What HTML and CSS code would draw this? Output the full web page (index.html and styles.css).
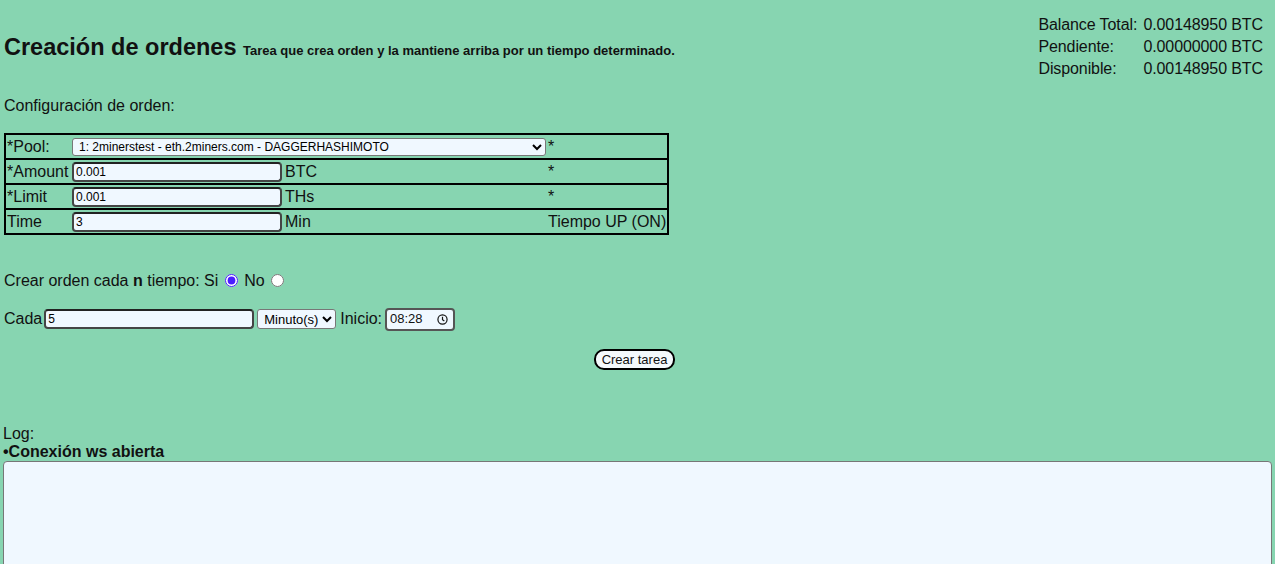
FILE: index.html
```html
<!DOCTYPE html>
<html lang="es">
<head>
<meta charset="utf-8">
<title>Creación de ordenes</title>
<link rel="stylesheet" href="styles.css">
</head>
<body>
<header class="top">
  <h2 class="title">Creación de ordenes <small class="subtitle">Tarea que crea orden y la mantiene arriba por un tiempo determinado.</small></h2>
  <div class="balance">
    <span>Balance Total:</span><span>0.00148950 BTC</span>
    <span>Pendiente:</span><span>0.00000000 BTC</span>
    <span>Disponible:</span><span>0.00148950 BTC</span>
  </div>
</header>

<p class="section">Configuración de orden:</p>

<table class="config">
  <colgroup>
    <col class="c1"><col class="c2"><col class="c3"><col class="c4">
  </colgroup>
  <tr>
    <td>*Pool:</td>
    <td colspan="2"><select class="pool"><option>1: 2minerstest - eth.2miners.com - DAGGERHASHIMOTO</option></select></td>
    <td>*</td>
  </tr>
  <tr>
    <td>*Amount</td>
    <td><input class="field" type="text" value="0.001"></td>
    <td>BTC</td>
    <td>*</td>
  </tr>
  <tr>
    <td>*Limit</td>
    <td><input class="field" type="text" value="0.001"></td>
    <td>THs</td>
    <td>*</td>
  </tr>
  <tr>
    <td>Time</td>
    <td><input class="field" type="text" value="3"></td>
    <td>Min</td>
    <td>Tiempo UP (ON)</td>
  </tr>
</table>

<div class="repeat">Crear orden cada <b>n</b> tiempo: Si <input class="radio" type="radio" name="rep" checked> No <input class="radio" type="radio" name="rep"></div>

<div class="cada">Cada <input class="field wide" type="text" value="5"> <select class="unit"><option>Minuto(s)</option></select> Inicio: <span class="time">08:28 <svg class="clock" viewBox="0 0 12 12" width="11" height="11"><circle cx="6" cy="6" r="5" fill="none" stroke="#111" stroke-width="1.3"/><path d="M6 3v3.2l2 1.4" fill="none" stroke="#111" stroke-width="1.3"/></svg></span></div>

<div class="actions"><button class="btn">Crear tarea</button></div>

<div class="log">
  <div>Log:</div>
  <div class="msg">•Conexión ws abierta</div>
  <textarea class="logbox"></textarea>
</div>
</body>
</html>
```

FILE: styles.css
```css
html, body {
  margin: 0;
  height: 100%;
  overflow: hidden;
}
body {
  background: #87d5b1;
  color: #111;
  font-family: "Liberation Sans", Arial, sans-serif;
  font-size: 16px;
  padding: 0 3px;
}
.top {
  display: flex;
  justify-content: space-between;
  align-items: flex-start;
}
.title {
  margin: 33px 0 0 1px;
  font-size: 23.5px;
  line-height: 28px;
  font-weight: bold;
}
.subtitle {
  font-size: 13px;
  font-weight: bold;
}
.balance {
  margin: 14px 9px 0 0;
  display: grid;
  grid-template-columns: 105px auto;
  line-height: 22px;
  letter-spacing: -0.1px;
}
.section {
  margin: 15px 0 0 1px;
  line-height: 22px;
}
.config {
  margin: 16px 0 0 1px;
  border-collapse: collapse;
  border: 2px solid #000;
  table-layout: fixed;
  width: 665px;
}
.config tr {
  border-bottom: 2px solid #000;
  height: 25px;
}
.config td {
  padding: 0 1px;
  white-space: nowrap;
  overflow: hidden;
  vertical-align: middle;
}
.c1 { width: 66px; }
.c2 { width: 213px; }
.c3 { width: 263px; }
.c4 { width: 121px; }
.pool {
  width: 474px;
  height: 18px;
  font-family: inherit;
  font-size: 12px;
  background: #f0f8ff;
  border: 1px solid #777;
  border-radius: 3px;
  padding: 0 0 0 2px;
}
.field {
  width: 210px;
  height: 20px;
  box-sizing: border-box;
  font-family: inherit;
  font-size: 12px;
  background: #f0f8ff;
  border: 2px solid #444;
  border-top-color: #222;
  border-radius: 4px;
  padding: 0 2px;
  margin: 0;
}
.repeat {
  margin: 35px 0 0 1px;
  line-height: 22px;
}
.radio {
  margin: 0 2px;
  width: 13px;
  height: 13px;
  vertical-align: -1px;
  accent-color: #4a1dff;
}
.cada {
  margin: 15px 0 0 1px;
  line-height: 24px;
  display: flex;
  align-items: center;
  gap: 4px;
}
.cada .wide {
  width: 210px;
  margin-left: -2px;
}
.unit {
  height: 20px;
  font-family: inherit;
  font-size: 13px;
  background: #f0f8ff;
  border: 1px solid #777;
  border-radius: 3px;
  padding: 0 0 0 2px;
  margin-left: -1px;
}
.time {
  display: inline-flex;
  align-items: center;
  justify-content: space-between;
  width: 70px;
  height: 23px;
  box-sizing: border-box;
  font-size: 13px;
  background: #f0f8ff;
  border: 2px solid #555;
  border-radius: 4px;
  padding: 0 5px 0 3px;
  margin-left: -1px;
}
.actions {
  margin-top: 18px;
  display: flex;
  justify-content: center;
  padding-right: 6px;
}
.btn {
  font-family: inherit;
  font-size: 13px;
  background: #f4f9fc;
  border: 2px solid #000;
  border-radius: 10px;
  height: 21px;
  padding: 0 6px;
  color: #111;
}
.log {
  margin-top: 55px;
  line-height: 18px;
}
.msg {
  font-weight: bold;
}
.logbox {
  display: block;
  box-sizing: border-box;
  width: 100%;
  height: 140px;
  margin-top: 0;
  background: #f0f8ff;
  border: 1px solid #777;
  border-radius: 4px;
  resize: none;
}
```
